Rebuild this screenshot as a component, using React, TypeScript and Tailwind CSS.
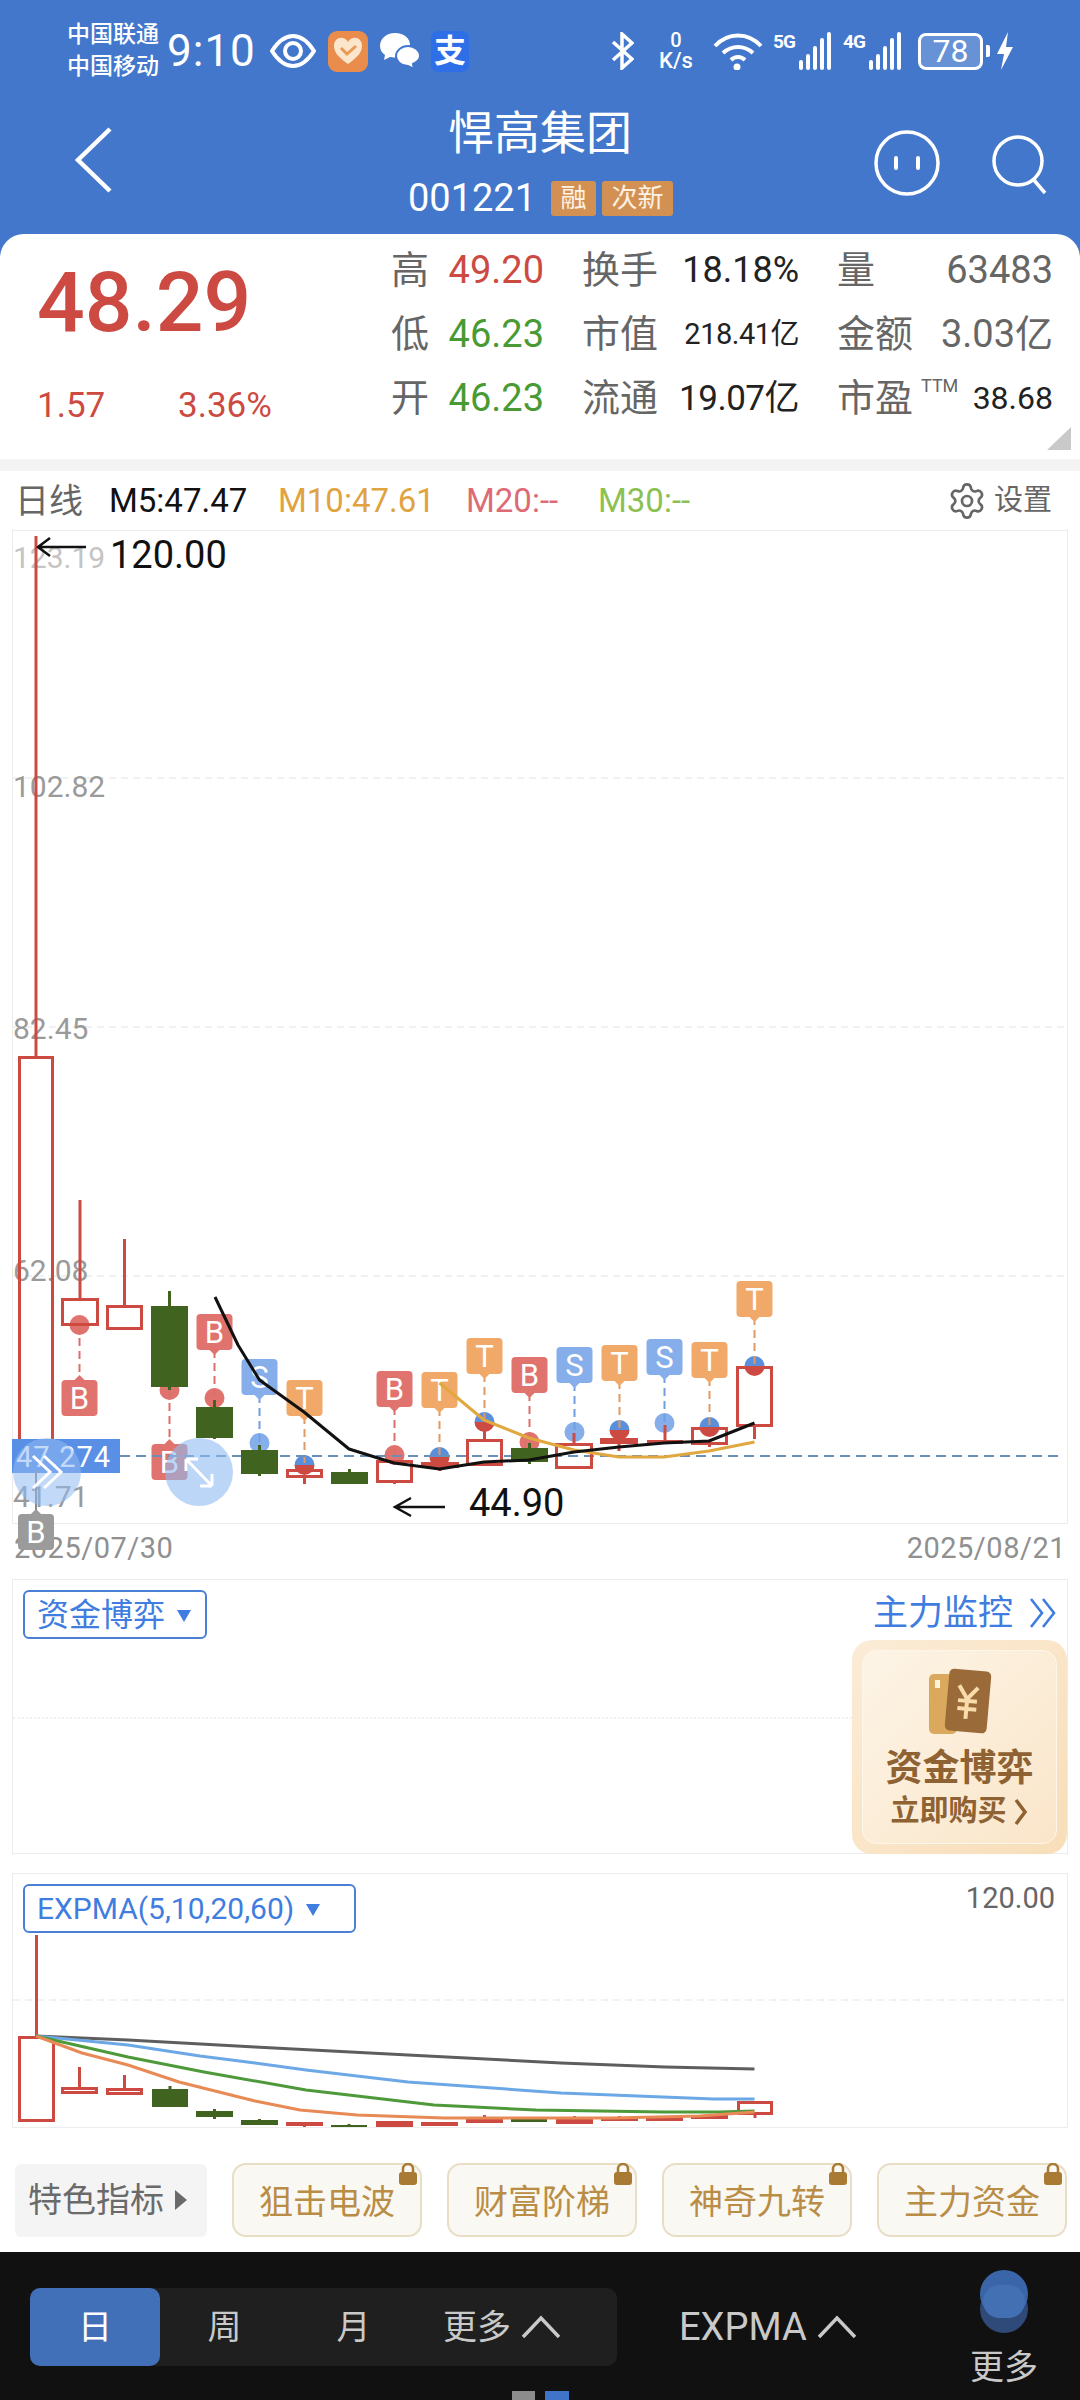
import { Settings } from "lucide-react";

const RED = "#cc4a42";
const GREEN = "#40631f";

type Candle = [x1: number, x2: number, top: number, bottom: number, wickTop: number, wickBottom: number, up: boolean];
type Signal = { x: number; badgeTop: number; dot: number; kind: "B" | "S" | "T"; half?: boolean; below?: boolean };

// Daily candles, in page coordinates of the main chart
const dayCandles: Candle[] = [
  [18, 54, 1056, 1458, 536, 1056, true],
  [61, 99, 1298, 1326, 1200, 1298, true],
  [106, 143, 1305, 1330, 1239, 1305, true],
  [151, 188, 1306, 1387, 1291, 1390, false],
  [196, 233, 1407, 1438, 1400, 1439, false],
  [241, 278, 1450, 1474, 1445, 1476, false],
  [286, 323, 1469, 1478, 1469, 1484, true],
  [331, 368, 1472, 1484, 1469, 1484, false],
  [376, 413, 1460, 1483, 1460, 1484, true],
  [421, 459, 1462, 1468, 1462, 1471, true],
  [466, 503, 1439, 1466, 1430, 1466, true],
  [511, 548, 1448, 1462, 1443, 1464, false],
  [555, 593, 1443, 1469, 1433, 1469, true],
  [600, 638, 1438, 1444, 1438, 1451, true],
  [647, 683, 1440, 1443, 1425, 1443, true],
  [691, 728, 1427, 1445, 1427, 1447, true],
  [736, 773, 1366, 1427, 1366, 1439, true],
];

const signals: Signal[] = [
  { x: 79.5, badgeTop: 1380, dot: 1325, kind: "B", below: true },
  { x: 169.5, badgeTop: 1444, dot: 1390, kind: "B", below: true },
  { x: 214.5, badgeTop: 1314, dot: 1398, kind: "B" },
  { x: 259.5, badgeTop: 1359, dot: 1443, kind: "S" },
  { x: 304.5, badgeTop: 1380, dot: 1465, kind: "T", half: true },
  { x: 394.5, badgeTop: 1371, dot: 1455, kind: "B" },
  { x: 439.5, badgeTop: 1372, dot: 1457, kind: "T", half: true },
  { x: 484.5, badgeTop: 1338, dot: 1422, kind: "T", half: true },
  { x: 529.5, badgeTop: 1357, dot: 1442, kind: "B" },
  { x: 574.5, badgeTop: 1347, dot: 1432, kind: "S" },
  { x: 619.5, badgeTop: 1345, dot: 1430, kind: "T", half: true },
  { x: 664.5, badgeTop: 1339, dot: 1423, kind: "S" },
  { x: 709.5, badgeTop: 1342, dot: 1427, kind: "T", half: true },
  { x: 754.5, badgeTop: 1281, dot: 1366, kind: "T", half: true },
];

const signalStyle = {
  B: { fill: "#e0736d", dash: "#d9706c" },
  S: { fill: "#86aeeb", dash: "#6f9fe0" },
  T: { fill: "#f0a968", dash: "#dd9a66" },
};

const expmaCandles: Candle[] = [
  [18, 55, 2036, 2122, 1935, 2036, true],
  [61, 98, 2087, 2094, 2067, 2087, true],
  [106, 143, 2088, 2095, 2075, 2088, true],
  [152, 188, 2089, 2107, 2086, 2107, false],
  [196, 233, 2111, 2117, 2109, 2119, false],
  [241, 278, 2120, 2125, 2119, 2125, false],
  [286, 323, 2122, 2126, 2122, 2127, true],
  [331, 367, 2125, 2127, 2124, 2127, false],
  [376, 413, 2121, 2127, 2121, 2127, true],
  [421, 458, 2122, 2124, 2122, 2125, true],
  [466, 503, 2117, 2123, 2115, 2123, true],
  [511, 547, 2119, 2122, 2118, 2122, false],
  [556, 593, 2118, 2124, 2116, 2124, true],
  [601, 638, 2117, 2119, 2116, 2119, true],
  [646, 683, 2117, 2119, 2116, 2119, true],
  [691, 728, 2115, 2119, 2114, 2119, true],
  [737, 773, 2101, 2115, 2101, 2118, true],
];

function CandleMark({ c }: { c: Candle }) {
  const [x1, x2, top, bottom, wickTop, wickBottom, up] = c;
  const mid = (x1 + x2) / 2;
  const color = up ? RED : GREEN;
  return (
    <g>
      {wickTop < top && <line x1={mid} x2={mid} y1={wickTop} y2={top} stroke={color} strokeWidth={3} />}
      {wickBottom > bottom && <line x1={mid} x2={mid} y1={bottom} y2={wickBottom} stroke={color} strokeWidth={3} />}
      {up ? (
        <rect x={x1 + 1.5} y={top + 1.5} width={x2 - x1 - 3} height={Math.max(bottom - top - 3, 1)} fill="none" stroke={color} strokeWidth={3} />
      ) : (
        <rect x={x1} y={top} width={x2 - x1} height={bottom - top} fill={color} />
      )}
    </g>
  );
}

function SignalDot({ s }: { s: Signal }) {
  const style = signalStyle[s.kind];
  const y1 = s.below ? s.dot : s.badgeTop + 36;
  const y2 = s.below ? s.badgeTop : s.dot;
  return (
    <g>
      {s.half ? (
        <>
          <path d={`M${s.x - 10} ${s.dot}a10 10 0 0 1 20 0z`} fill="#5a8fdc" />
          <path d={`M${s.x - 10} ${s.dot}a10 10 0 0 0 20 0z`} fill={RED} />
        </>
      ) : (
        <circle cx={s.x} cy={s.dot} r={10} fill={style.fill} />
      )}
      <line x1={s.x} x2={s.x} y1={y1} y2={y2} stroke={style.dash} strokeWidth={2} strokeDasharray="8 5" />
    </g>
  );
}

function SignalBadge({ s, fill }: { s: Signal; fill?: string }) {
  const color = fill ?? signalStyle[s.kind].fill;
  const tipY = s.below ? s.badgeTop - 5 : s.badgeTop + 41;
  const baseY = s.below ? s.badgeTop + 1 : s.badgeTop + 35;
  return (
    <g>
      <path d={`M${s.x - 6} ${baseY}L${s.x} ${tipY}L${s.x + 6} ${baseY}z`} fill={color} />
      <rect x={s.x - 18} y={s.badgeTop} width={36} height={36} rx={4} fill={color} />
      <text x={s.x} y={s.badgeTop + 29} textAnchor="middle" fontSize={31} fill="#fff">
        {s.kind}
      </text>
    </g>
  );
}

function toPoints(p: number[][]) {
  return p.map((q) => q.join(",")).join(" ");
}

function MainChart() {
  const ma5 = [[215, 1297], [238, 1345], [259.5, 1380], [304, 1412], [349, 1449], [394, 1463], [439.5, 1469], [484, 1462], [529, 1460], [574, 1452], [619, 1447], [664, 1443], [709, 1441], [754.5, 1423]];
  const ma10 = [[439.5, 1383], [484, 1420], [529, 1438], [574, 1450], [619, 1457], [664, 1457], [709, 1451], [754.5, 1442]];
  const axis = [["123.19", 568], ["102.82", 797], ["82.45", 1039], ["62.08", 1281]];
  return (
    <svg className="absolute left-[-1px] top-[-1px] overflow-visible" width={1056} height={995} viewBox="12 530 1056 995">
      {[778, 1027, 1276].map((y) => (
        <line key={y} x1={13} x2={1066} y1={y} y2={y} stroke="#ededed" strokeWidth={1.5} strokeDasharray="7 5" />
      ))}
      {axis.map(([t, y]) => (
        <text key={t} x={13} y={y} fontSize={30} fill={t === "123.19" ? "#c4c4c4" : "#9a9a9a"}>
          {t}
        </text>
      ))}
      {signals.map((s) => (
        <SignalDot key={s.x} s={s} />
      ))}
      {signals.map((s) => (
        <SignalBadge key={s.x} s={s} />
      ))}
      <line x1={120} x2={1062} y1={1456} y2={1456} stroke="#6a90b8" strokeWidth={2} strokeDasharray="10 6" />
      {dayCandles.map((c) => (
        <CandleMark key={c[0]} c={c} />
      ))}
      <polyline points={toPoints(ma10)} fill="none" stroke="#e0a83e" strokeWidth={3} strokeLinejoin="round" />
      <polyline points={toPoints(ma5)} fill="none" stroke="#111" strokeWidth={3} strokeLinejoin="round" />

      {/* last-price tag */}
      <rect x={12} y={1439} width={108} height={34} fill="#5a8fe6" />
      <text x={16} y={1467} fontSize={29} fill="#fff" letterSpacing={1}>
        47.274
      </text>
      <text x={13} y={1507} fontSize={30} fill="#9a9a9a">
        41.71
      </text>

      {/* faded first-bar marker */}
      <line x1={36} x2={36} y1={1470} y2={1513} stroke="#8a8a8a" strokeWidth={2} />
      <SignalBadge s={{ x: 36, badgeTop: 1514, dot: 0, kind: "B", below: true }} fill="#9b9b9b" />

      {/* floating controls */}
      <circle cx={47} cy={1472} r={34} fill="#8fbaf3" fillOpacity={0.55} />
      <path d="M33 1456l17 16-17 16M44 1456l17 16-17 16" fill="none" stroke="#fff" strokeWidth={3} />
      <circle cx={199} cy={1472} r={34} fill="#8fbaf3" fillOpacity={0.6} />
      <path d="M186 1459l26 27M186 1459h12M186 1459v12M212 1486h-12M212 1486v-12" fill="none" stroke="#fff" strokeWidth={3} />

      {/* high / low annotations */}
      <path d="M86 547H38M50 538l-12 9 12 9" fill="none" stroke="#111" strokeWidth={2.5} />
      <text x={110} y={568} fontSize={38} fill="#111">
        120.00
      </text>
      <path d="M445 1507H395M411 1498l-16 9 16 9" fill="none" stroke="#111" strokeWidth={2.5} />
      <text x={469} y={1516} fontSize={38} fill="#111">
        44.90
      </text>
    </svg>
  );
}

function ExpmaChart() {
  const gray = [[36, 2036], [128, 2040], [255, 2047], [408, 2055], [561, 2063], [665, 2067], [754.5, 2069]];
  const blue = [[36, 2036], [128, 2045], [200, 2056], [255, 2063], [306, 2070], [408, 2082], [561, 2093], [714, 2099], [754.5, 2099]];
  const green = [[36, 2036], [128, 2057], [204, 2072], [306, 2090], [434, 2105], [536, 2110], [663, 2112], [720, 2112], [754.5, 2111]];
  const orange = [[36, 2036], [82, 2053], [128, 2065], [179, 2082], [255, 2101], [300, 2110], [357, 2115], [444, 2118], [612, 2118], [700, 2116], [754.5, 2112]];
  return (
    <svg className="absolute left-[-1px] top-[-1px] overflow-visible" width={1056} height={255} viewBox="12 1873 1056 255">
      <line x1={13} x2={1066} y1={2000} y2={2000} stroke="#ededed" strokeWidth={1.5} strokeDasharray="7 5" />
      {expmaCandles.map((c) => (
        <CandleMark key={c[0]} c={c} />
      ))}
      <polyline points={toPoints(gray)} fill="none" stroke="#5e5e5e" strokeWidth={3} strokeLinejoin="round" />
      <polyline points={toPoints(blue)} fill="none" stroke="#6ba8e5" strokeWidth={3} strokeLinejoin="round" />
      <polyline points={toPoints(green)} fill="none" stroke="#4e9a3a" strokeWidth={3} strokeLinejoin="round" />
      <polyline points={toPoints(orange)} fill="none" stroke="#e88a55" strokeWidth={3} strokeLinejoin="round" />
    </svg>
  );
}

function StatusBar() {
  return (
    <div className="h-[88px] flex items-center pl-[67px] text-white pt-[14px]">
      <div className="w-[100px] flex flex-col gap-[8px] text-[23px] leading-[24px] font-medium">
        <span>中国联通</span>
        <span>中国移动</span>
      </div>
      <span className="text-[44px] leading-none w-[103px] tracking-[1px]">9:10</span>
      {/* eye */}
      <svg width={46} height={34} viewBox="0 0 46 34" className="mr-[12px]">
        <path d="M2 17C9 6 16 2 23 2s14 4 21 15C37 28 30 32 23 32S9 28 2 17z" fill="none" stroke="#fff" strokeWidth={4} />
        <circle cx={23} cy={17} r={8} fill="none" stroke="#fff" strokeWidth={4} />
      </svg>
      {/* health app */}
      <svg width={40} height={41} viewBox="0 0 40 41" className="mr-[11px]">
        <rect width={40} height={41} rx={9} fill="#e98c4c" />
        <path d="M20 33C10 26 6 21 6 15c0-9 10-11 14-4 4-7 14-5 14 4 0 6-4 11-14 18z" fill="#fbe6cc" />
        <path d="M13 17l6 6 9-8" fill="none" stroke="#e89a55" strokeWidth={3} />
      </svg>
      {/* chat bubbles */}
      <svg width={42} height={38} viewBox="0 0 42 38" className="mr-[10px]">
        <path d="M16 1C7 1 1 7 1 14c0 4 2 7 5 9l-1 5 6-3c1 .3 3 .5 5 .5C25 25.500 31 20 31 13S25 1 16 1z" fill="#fff" />
        <path d="M29 14c-7 0-12 5-12 10s5 10 12 10l6 3-1-5c4-2 7-5 7-8 0-5-5-10-12-10z" fill="#fff" stroke="#4277cc" strokeWidth={2} />
      </svg>
      <span className="w-[38px] h-[41px] rounded-[7px] bg-[#2e6fe8] flex items-center justify-center text-[32px] leading-none font-bold">支</span>

      <div className="ml-[142px] flex items-center">
        {/* bluetooth */}
        <svg width={23} height={38} viewBox="0 0 23 38" className="mr-[22px]">
          <path d="M2 10l19 17-10 9V2l10 9L2 28" fill="none" stroke="#fff" strokeWidth={3.5} />
        </svg>
        <div className="w-[40px] flex flex-col items-center leading-none font-medium mr-[17px]">
          <span className="text-[20px] leading-[19px]">0</span>
          <span className="text-[22px] leading-[22px]">K/s</span>
        </div>
        {/* wifi */}
        <svg width={50} height={38} viewBox="0 0 50 38" className="mr-[10px]">
          <path d="M2 14C15 0 35 0 48 14" fill="none" stroke="#fff" strokeWidth={4} />
          <path d="M10 21c9-8 21-8 30 0" fill="none" stroke="#fff" strokeWidth={4} />
          <path d="M18 28c4-4 10-4 14 0" fill="none" stroke="#fff" strokeWidth={4} />
          <circle cx={24} cy={35} r={3.500} fill="#fff" />
        </svg>
        <Signal5 label="5G" />
        <span className="w-[12px]" />
        <Signal5 label="4G" />
        {/* battery */}
        <div className="ml-[17px] w-[65px] h-[37px] rounded-[8px] border-[3px] border-white flex items-center justify-center text-[32px] leading-none bg-white/20">
          78
        </div>
        <span className="w-[4px] h-[12px] bg-white rounded-r-[2px] ml-[3px]" />
        <svg width={18} height={38} viewBox="0 0 18 38" className="ml-[6px]">
          <path d="M12 0L1 22h7l-3 16 12-23h-7z" fill="#fff" />
        </svg>
      </div>
    </div>
  );
}

function Signal5({ label }: { label: string }) {
  return (
    <div className="flex items-end h-[38px]">
      <span className="text-[19px] leading-[20px] font-bold self-start w-[26px] tracking-[-1px]">{label}</span>
      <div className="flex items-end gap-[3px]">
        {[10, 16, 24, 32, 38].map((h) => (
          <span key={h} className="w-[4px] bg-white rounded-[2px]" style={{ height: h }} />
        ))}
      </div>
    </div>
  );
}

function NavBar() {
  return (
    <div className="relative h-[146px]">
      <div className="flex flex-col items-center text-white">
        <h1 className="text-[46px] leading-[46px] mt-[22px] font-normal">悍高集团</h1>
        <div className="flex items-center mt-[24px] h-[36px] pl-[1px]">
          <span className="text-[38px] leading-none mr-[15px]">001221</span>
          <span className="w-[45px] h-[35px] rounded-[3px] bg-[#d29153] flex items-center justify-center text-[26px] leading-none text-[#fdf1e3]">融</span>
          <span className="ml-[6px] w-[71px] h-[35px] rounded-[3px] bg-[#d29153] flex items-center justify-center text-[26px] leading-none text-[#fdf1e3]">次新</span>
        </div>
      </div>
      {/* back, robot and search sit on the title bar's edges */}
      <svg className="absolute left-[72px] top-[37px]" width={44} height={70} viewBox="0 0 44 70">
        <path d="M38 4L6 35l32 31" fill="none" stroke="#fff" strokeWidth={4.5} transform="translate(0 0)" />
      </svg>
      <svg className="absolute left-[873px] top-[40px]" width={180} height={70} viewBox="0 0 180 70">
        <circle cx={34} cy={35} r={31} fill="none" stroke="#fff" strokeWidth={3.5} />
        <rect x={21} y={28} width={4} height={14} rx={2} fill="#fff" />
        <rect x={43} y={28} width={4} height={14} rx={2} fill="#fff" />
        <circle cx={145} cy={33} r={24} fill="none" stroke="#fff" strokeWidth={3.5} />
        <path d="M160 51l12 14" fill="none" stroke="#fff" strokeWidth={3.5} />
      </svg>
    </div>
  );
}

function StatCell({ label, value, valueClass, labelExtra }: { label: string; value: string; valueClass: string; labelExtra?: string }) {
  return (
    <div className="flex items-center justify-between">
      <span className="text-[38px] text-[#666666] leading-none relative">
        {label}
        {labelExtra && <sup className="absolute left-[84px] top-[-2px] text-[18px] leading-none">{labelExtra}</sup>}
      </span>
      <span className={valueClass}>{value}</span>
    </div>
  );
}

function QuotePanel() {
  const red = "text-[38px] text-[#cc4a42] leading-none";
  const green = "text-[38px] text-[#4a9a33] leading-none";
  const ink = "text-[36px] text-[#222222] leading-none";
  const gray = "text-[38px] text-[#666666] leading-none";
  return (
    <section className="relative h-[225px] bg-white rounded-t-[24px] flex">
      <div className="w-[391px] pl-[37px] flex flex-col">
        <div className="text-[84px] leading-none text-[#cc4a42] font-medium mt-[27px]">48.29</div>
        <div className="flex mt-[43px] text-[35px] leading-none text-[#cc4a42]">
          <span className="w-[141px]">1.57</span>
          <span>3.36%</span>
        </div>
      </div>
      <div className="grid grid-cols-[153px_217px_216px] gap-x-[38px] auto-rows-[64px] pt-[4px]">
        <StatCell label="高" value="49.20" valueClass={red} />
        <StatCell label="换手" value="18.18%" valueClass={ink} />
        <StatCell label="量" value="63483" valueClass={gray} />
        <StatCell label="低" value="46.23" valueClass={green} />
        <StatCell label="市值" value="218.41亿" valueClass="text-[29px] text-[#222222] leading-none tracking-[-0.5px]" />
        <StatCell label="金额" value="3.03亿" valueClass={gray} />
        <StatCell label="开" value="46.23" valueClass={green} />
        <StatCell label="流通" value="19.07亿" valueClass="text-[35px] text-[#222222] leading-none tracking-[-0.5px]" />
        <StatCell label="市盈" labelExtra="TTM" value="38.68" valueClass="text-[32px] text-[#222222] leading-none" />
      </div>
      <svg className="absolute right-[9px] bottom-[9px]" width={24} height={23} viewBox="0 0 24 23">
        <path d="M24 0V23H0z" fill="#c9c9c9" />
      </svg>
    </section>
  );
}

function LegendRow() {
  return (
    <div className="h-[59px] flex items-center pl-[15px] pr-[28px] text-[33px] leading-none">
      <span className="text-[#666666] text-[34px] w-[94px]">日线</span>
      <span className="text-[#111111] w-[169px]">M5:47.47</span>
      <span className="text-[#dfa33f] w-[188px]">M10:47.61</span>
      <span className="text-[#de6b74] w-[132px]">M20:--</span>
      <span className="text-[#8cc152]">M30:--</span>
      <Settings className="ml-auto mr-[7px] text-[#666666]" size={40} strokeWidth={1.6} />
      <span className="text-[#666666] text-[29px]">设置</span>
    </div>
  );
}

function PromoCard() {
  return (
    <div className="w-[215px] h-[214px] rounded-[20px] bg-gradient-to-br from-[#fbecd6] to-[#f8deb9] p-[10px]">
      <div className="h-full rounded-[14px] bg-gradient-to-br from-[#fdf4e6] to-[#fae6ca] border border-[#fff6ea] flex flex-col items-center pt-[17px]">
        <svg width={66} height={68} viewBox="0 0 66 68">
          <rect x={2} y={6} width={28} height={60} rx={5} fill="#dba95e" />
          <rect x={8} y={12} width={5} height={8} fill="#fff3dc" />
          <rect x={20} y={2} width={42} height={62} rx={5} fill="#9a6a38" transform="rotate(5 41 33)" />
          <path d="M31 18l9 13 10-12M40 31v20M31 33h19M31 41h19" fill="none" stroke="#f8dcab" strokeWidth={4} transform="rotate(5 41 33)" />
        </svg>
        <span className="text-[37px] leading-none font-bold text-[#8e6232] mt-[14px]">资金博弈</span>
        <div className="flex items-center mt-[10px]">
          <span className="text-[29px] leading-none font-bold text-[#8e6232]">立即购买</span>
          <svg width={16} height={28} viewBox="0 0 16 28" className="ml-[6px]">
            <path d="M3 2l9 12-9 12" fill="none" stroke="#8e6232" strokeWidth={3.5} />
          </svg>
        </div>
      </div>
    </div>
  );
}

function Caret({ color }: { color: string }) {
  return (
    <svg width={14} height={14} viewBox="0 0 14 14">
      <path d="M0 2h14L7 14z" fill={color} />
    </svg>
  );
}

function FundPanel() {
  return (
    <section className="relative mx-[12px] h-[275px] mt-[7px] border border-[#ececec]">
      <div className="absolute left-0 right-[215px] top-[137px] border-t-2 border-dotted border-[#f0f0f0]" />
      <div className="flex items-start justify-between pl-[10px] h-[60px] pt-[10px]">
        <div className="h-[49px] w-[184px] rounded-[6px] border-2 border-[#4a7fd6] flex items-center pl-[12px] gap-[12px]">
          <span className="text-[32px] leading-none text-[#3f7de0]">资金博弈</span>
          <Caret color="#3f7de0" />
        </div>
        <div className="flex items-center pr-[10px] h-[46px]">
          <span className="text-[35px] leading-none text-[#3f7de0]">主力监控</span>
          <svg width={28} height={32} viewBox="0 0 28 32" className="ml-[16px]">
            <path d="M2 2l11 14L2 30M14 2l11 14-11 14" fill="none" stroke="#3f7de0" strokeWidth={2.6} />
          </svg>
        </div>
      </div>
      <div className="flex justify-end">
        <PromoCard />
      </div>
    </section>
  );
}

function ExpmaPanel() {
  return (
    <section className="relative mx-[12px] h-[255px] mt-[19px] border border-[#ececec]">
      <ExpmaChart />
      <div className="relative flex items-start justify-between pl-[10px] pt-[10px]">
        <div className="h-[49px] w-[333px] rounded-[6px] border-2 border-[#4a7fd6] bg-white flex items-center pl-[12px] gap-[12px]">
          <span className="text-[30px] leading-none text-[#3f7de0]">EXPMA(5,10,20,60)</span>
          <Caret color="#3f7de0" />
        </div>
        <span className="text-[29px] leading-none text-[#666666] pr-[12px]">120.00</span>
      </div>
    </section>
  );
}

function PaidChip({ name }: { name: string }) {
  return (
    <div className="relative w-[190px] h-[74px] rounded-[14px] border-2 border-[#e8dec6] bg-[#faf8f3] flex items-center justify-center text-[34px] leading-none text-[#b98d45] pt-[3px]">
      {name}
      <svg className="absolute right-[3px] top-[-2px]" width={18} height={22} viewBox="0 0 18 22">
        <path d="M4 10V6a5 5 0 0 1 10 0v4" fill="none" stroke="#a97a33" strokeWidth={2.5} />
        <rect x={0} y={9} width={18} height={13} rx={3} fill="#a97a33" />
      </svg>
    </div>
  );
}

function IndicatorRow() {
  return (
    <div className="flex items-center pl-[15px] pt-[35px] gap-[25px]">
      <div className="w-[192px] h-[73px] rounded-[6px] bg-[#f4f4f4] flex items-center pl-[13px] gap-[11px]">
        <span className="text-[34px] leading-none text-[#6a6a6a]">特色指标</span>
        <svg width={12} height={20} viewBox="0 0 12 20">
          <path d="M0 0l12 10L0 20z" fill="#6a6a6a" />
        </svg>
      </div>
      <div className="flex gap-[25px]">
        {["狙击电波", "财富阶梯", "神奇九转", "主力资金"].map((n) => (
          <PaidChip key={n} name={n} />
        ))}
      </div>
    </div>
  );
}

function UpChevron() {
  return (
    <svg width={40} height={24} viewBox="0 0 40 24">
      <path d="M2 22L20 3l18 19" fill="none" stroke="#c9c9c9" strokeWidth={3.5} />
    </svg>
  );
}

function BottomBar() {
  return (
    <footer className="flex-1 bg-[#111111] flex flex-col text-[#c9c9c9]">
      <div className="flex items-start h-[139px] pl-[30px]">
        <div className="mt-[36px] w-[587px] h-[78px] rounded-[10px] bg-[#1f1f1f] flex items-center text-[34px] leading-none">
          <span className="w-[130px] h-full rounded-[10px] bg-[#4270b8] text-white flex items-center justify-center">日</span>
          <span className="w-[129px] text-center">周</span>
          <span className="w-[129px] text-center">月</span>
          <span className="flex items-center gap-[10px] pl-[25px]">
            更多
            <UpChevron />
          </span>
        </div>
        <div className="mt-[36px] h-[78px] ml-[62px] flex items-center gap-[10px] text-[38px] leading-none">
          EXPMA
          <UpChevron />
        </div>
        <div className="ml-auto mr-[16px] w-[120px] mt-[18px] flex flex-col items-center">
          <div className="relative w-[48px] h-[63px]">
            <div className="absolute left-0 bottom-0 w-[48px] h-[48px] rounded-full bg-[#2f4a78]" />
            <div className="absolute left-0 top-0 w-[48px] h-[48px] rounded-full bg-[#3a65a8]" />
            <div className="absolute left-[3px] top-[15px] w-[42px] h-[33px] rounded-full bg-[#436fb3]" />
          </div>
          <span className="text-[34px] leading-none mt-[17px]">更多</span>
        </div>
      </div>
      <div className="flex justify-center gap-[10px]">
        <span className="w-[23px] h-[9px] bg-[#8c8c8c]" />
        <span className="w-[24px] h-[9px] bg-[#3f74c8]" />
      </div>
    </footer>
  );
}

export default function App() {
  return (
    <div
      className="w-[1080px] h-[2400px] overflow-hidden bg-white flex flex-col"
      style={{ fontFamily: "Roboto, 'Noto Sans CJK SC', sans-serif" }}
    >
      <header className="h-[234px] bg-[#4277cc]">
        <StatusBar />
        <NavBar />
      </header>
      <div className="bg-[#4277cc]">
        <QuotePanel />
      </div>
      <div className="h-[12px] bg-[#f3f3f3]" />
      <LegendRow />
      <section className="relative mx-[12px] h-[994px] border border-[#ececec]">
        <MainChart />
      </section>
      <div className="flex justify-between px-[14px] h-[48px] items-center text-[29px] leading-none text-[#909090] tracking-[0.5px]">
        <span>2025/07/30</span>
        <span>2025/08/21</span>
      </div>
      <FundPanel />
      <ExpmaPanel />
      <IndicatorRow />
      <div className="h-[15px]" />
      <BottomBar />
    </div>
  );
}
